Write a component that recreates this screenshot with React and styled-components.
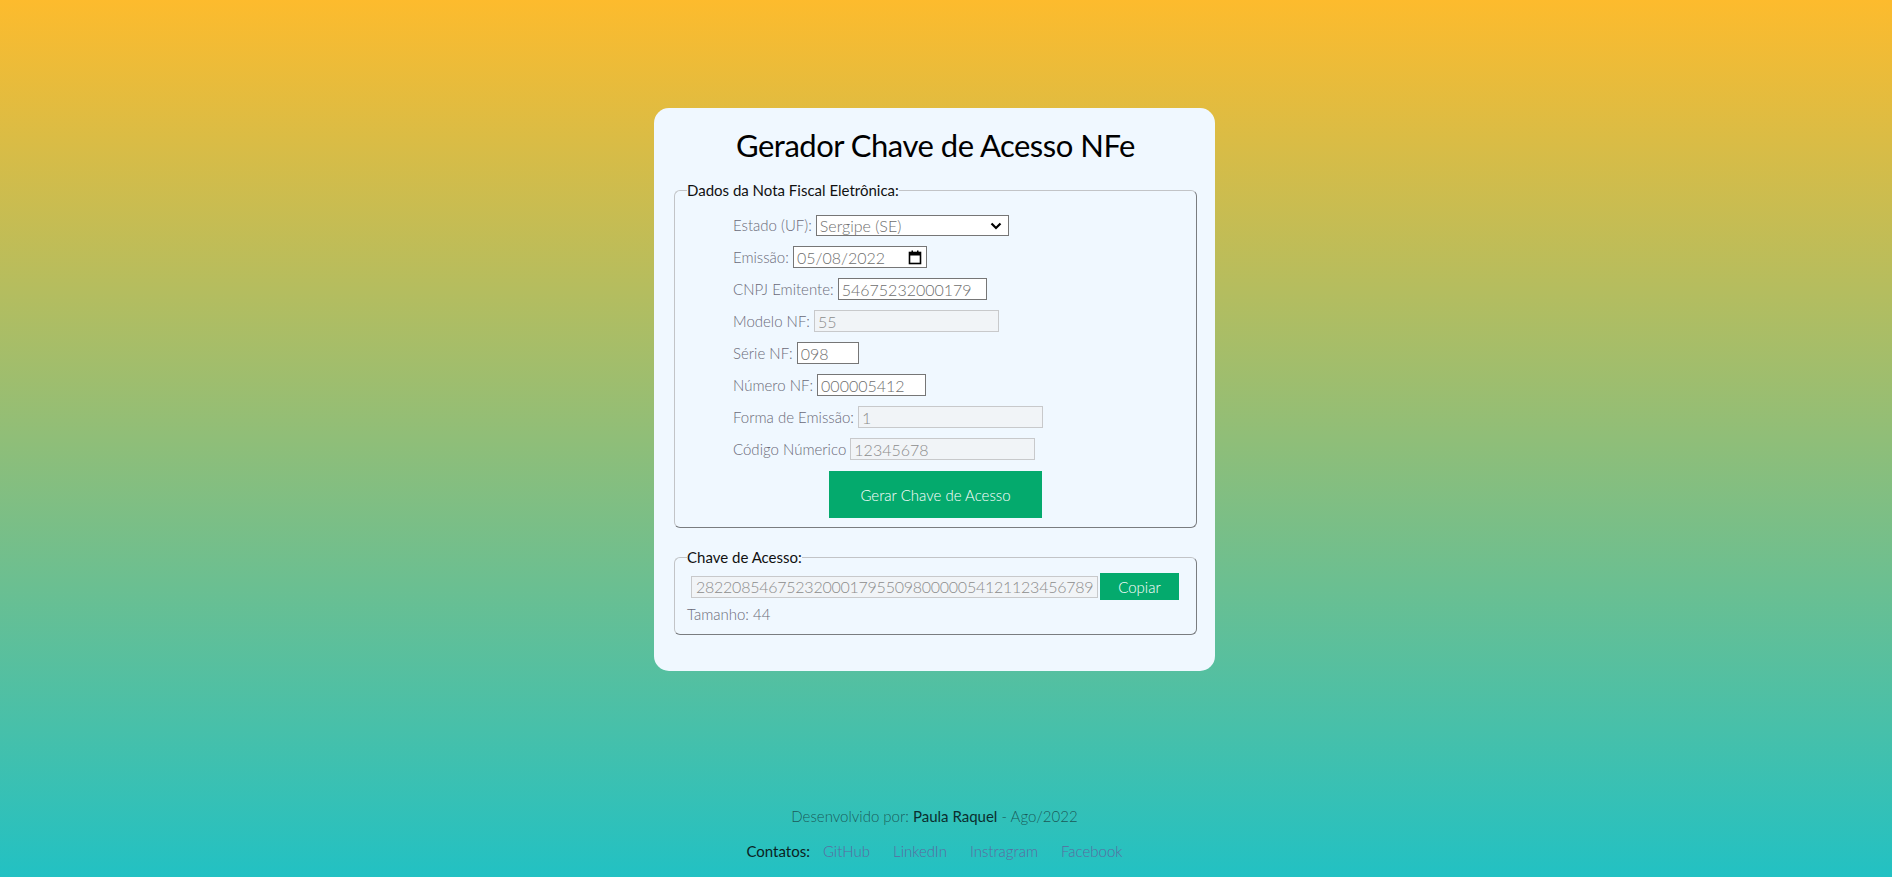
import React from "react";
import styled, { createGlobalStyle } from "styled-components";

const GlobalStyle = createGlobalStyle`
  html, body { margin: 0; padding: 0; }
  body {
    min-height: 100vh;
    background: linear-gradient(0deg, #22c1c3 0%, #fdbb2d 100%);
    font-family: "Lato", "Noto Sans", sans-serif;
  }
`;

const Page = styled.div`
  min-height: 100vh;
  box-sizing: border-box;
  display: flex;
  flex-direction: column;
  align-items: center;
  padding: 108px 23px 0 0;
`;

const Card = styled.main`
  width: 561px;
  height: 563px;
  box-sizing: border-box;
  padding: 0 18px 0 20px;
  background: #f0f8ff;
  border-radius: 15px;
`;

const Title = styled.h1`
  margin: 0;
  padding-top: 17px;
  height: 56px;
  font-size: 31px;
  letter-spacing: -0.5px;
  font-weight: 400;
  line-height: 40px;
  text-align: center;
  color: #000;
`;

const Fieldset = styled.fieldset`
  margin: 0;
  padding: ${(p) => p.$pad};
  border-style: solid;
  border-width: 1px;
  border-color: #c2c4c7 #7a7d80 #7a7d80 #c2c4c7;
  border-radius: 6px;
  & + & { margin-top: 20px; }
`;

const Legend = styled.legend`
  padding: 0;
  margin-left: 0;
  font-size: 15px;
  color: #111;
  font-weight: 400;
`;

const Form = styled.div`
  display: flex;
  flex-direction: column;
  padding: 10px 0 0 46px;
`;

const Row = styled.label`
  display: flex;
  align-items: center;
  height: 32px;
  font-size: 15px;
  font-weight: 300;
  color: #6a6a78;
  white-space: pre;
`;

const Field = styled.input`
  box-sizing: border-box;
  width: ${(p) => p.$w}px;
  height: 22px;
  margin: 0;
  padding: 0 3px;
  font-family: "Lato", sans-serif;
  font-size: 16px;
  font-weight: 300;
  color: ${(p) => (p.disabled ? "#8c8c8c" : "#6e6e6e")};
  background: ${(p) => (p.disabled ? "#f1f4f7" : "#fff")};
  border: 1px solid ${(p) => (p.disabled ? "#c8c9cb" : "#767676")};
  border-radius: 0;
  outline: none;
`;

const KeyField = styled(Field)`
  letter-spacing: -0.25px;
  padding: 0 2px 0 4px;
`;

const SelectBox = styled.div`
  position: relative;
  box-sizing: border-box;
  width: 193px;
  height: 21px;
  display: flex;
  align-items: center;
  padding: 0 3px;
  border: 1px solid #767676;
  background: #fff;
  font-size: 16px;
  font-weight: 300;
  color: #6e6e6e;
`;

const Chevron = styled.svg`
  position: absolute;
  right: 6px;
  top: 5px;
`;

const DateBox = styled(SelectBox)`
  width: 134px;
  height: 22px;
`;

const CalIcon = styled.svg`
  position: absolute;
  right: 4px;
  top: 3px;
`;

const Actions = styled.div`
  display: flex;
  justify-content: center;
  padding: 6px 0 0;
`;

const GreenButton = styled.button`
  box-sizing: border-box;
  width: ${(p) => p.$w}px;
  height: ${(p) => p.$h}px;
  border: none;
  margin: 0;
  padding: 0;
  background: #04aa6d;
  color: #fff;
  font-family: "Lato", sans-serif;
  font-size: 15px;
  font-weight: 300;
  cursor: pointer;
`;

const KeyRow = styled.div`
  display: flex;
  align-items: center;
  gap: 2px;
  padding-left: 4px;
  margin-top: 7px;
`;

const Size = styled.div`
  font-size: 15px;
  font-weight: 300;
  color: #6a6a78;
  line-height: 20px;
  margin-top: 4px;
`;

const Footer = styled.footer`
  margin-top: 135px;
  display: flex;
  flex-direction: column;
  align-items: center;
  gap: 15px;
  font-size: 15px;
  font-weight: 300;
  line-height: 20px;
`;

const Credit = styled.p`
  margin: 0;
  color: rgba(20, 60, 60, 0.78);
  & strong { font-weight: 400; color: #0b2e2e; }
`;

const Contacts = styled.nav`
  display: flex;
  align-items: center;
  gap: 23px;
  & span { color: #0b2222; font-weight: 400; margin-right: -10px; }
`;

const Link = styled.a`
  color: #5c6aa0;
  text-decoration: none;
`;

export default function App() {
  return (
    <>
      <GlobalStyle />
      <Page>
        <Card>
          <Title>Gerador Chave de Acesso NFe</Title>
          <Fieldset $pad="0 12px 9px">
            <Legend>Dados da Nota Fiscal Eletrônica:</Legend>
            <Form>
              <Row>
                {"Estado (UF): "}
                <SelectBox>
                  Sergipe (SE)
                  <Chevron width="12" height="10" viewBox="0 0 12 10">
                    <path d="M1.5 2.5 L6 7 L10.5 2.5" fill="none" stroke="#000" strokeWidth="2.2" />
                  </Chevron>
                </SelectBox>
              </Row>
              <Row>
                {"Emissão: "}
                <DateBox>
                  05/08/2022
                  <CalIcon width="14" height="15" viewBox="0 0 14 15">
                    <rect x="1.5" y="2.5" width="11" height="11" fill="none" stroke="#000" strokeWidth="1.6" />
                    <rect x="1.5" y="2.5" width="11" height="3" fill="#000" />
                    <rect x="3.5" y="0.5" width="1.5" height="3" fill="#000" />
                    <rect x="9" y="0.5" width="1.5" height="3" fill="#000" />
                  </CalIcon>
                </DateBox>
              </Row>
              <Row>
                {"CNPJ Emitente: "}
                <Field $w={149} defaultValue="54675232000179" />
              </Row>
              <Row>
                {"Modelo NF: "}
                <Field $w={185} disabled defaultValue="55" />
              </Row>
              <Row>
                {"Série NF: "}
                <Field $w={62} defaultValue="098" />
              </Row>
              <Row>
                {"Número NF: "}
                <Field $w={109} defaultValue="000005412" />
              </Row>
              <Row>
                {"Forma de Emissão: "}
                <Field $w={185} disabled defaultValue="1" />
              </Row>
              <Row>
                {"Código Númerico "}
                <Field $w={185} disabled defaultValue="12345678" />
              </Row>
            </Form>
            <Actions>
              <GreenButton $w={213} $h={47}>Gerar Chave de Acesso</GreenButton>
            </Actions>
          </Fieldset>
          <Fieldset $pad="0 12px 10px">
            <Legend>Chave de Acesso:</Legend>
            <KeyRow>
              <KeyField $w={407} disabled defaultValue="28220854675232000179550980000054121123456789" />
              <GreenButton $w={79} $h={27}>Copiar</GreenButton>
            </KeyRow>
            <Size>Tamanho: 44</Size>
          </Fieldset>
        </Card>
        <Footer>
          <Credit>
            Desenvolvido por: <strong>Paula Raquel</strong> - Ago/2022
          </Credit>
          <Contacts>
            <span>Contatos:</span>
            <Link href="#">GitHub</Link>
            <Link href="#">LinkedIn</Link>
            <Link href="#">Instragram</Link>
            <Link href="#">Facebook</Link>
          </Contacts>
        </Footer>
      </Page>
    </>
  );
}
